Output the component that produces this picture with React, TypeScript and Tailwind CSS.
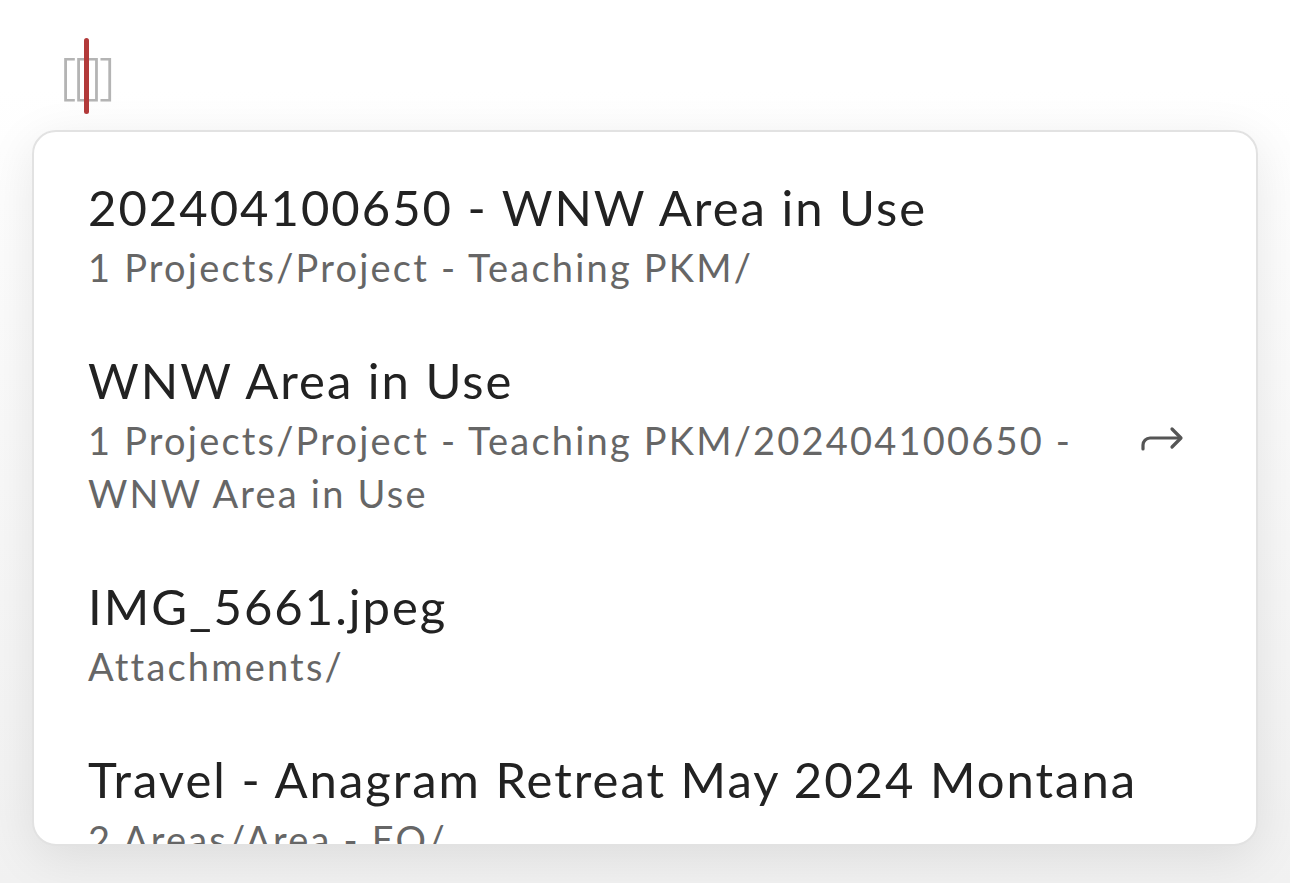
import React from "react";

// Link suggestions shown under the [[ ]] trigger
const suggestions = [
  { id: "1", title: "202404100650 - WNW Area in Use", path: "1 Projects/Project - Teaching PKM/", alias: false },
  { id: "2", title: "WNW Area in Use", path: "1 Projects/Project - Teaching PKM/202404100650 - WNW Area in Use", alias: true },
  { id: "3", title: "IMG_5661.jpeg", path: "Attachments/", alias: false },
  { id: "4", title: "Travel - Anagram Retreat May 2024 Montana", path: "2 Areas/Area - EQ/", alias: false },
];

function AliasArrow() {
  return (
    <svg width="44" height="30" viewBox="0 0 44 30" fill="none" stroke="#555" strokeWidth="3.2" strokeLinecap="round" strokeLinejoin="round">
      <path d="M3 26v-4a7 7 0 0 1 7-7h30" />
      <path d="M32 6l9 9-9 9" />
    </svg>
  );
}

export default function App() {
  return (
    <div
      className="h-[883px] overflow-hidden bg-gradient-to-b from-white from-10% to-[#f1f1f1] flex flex-col"
      style={{ fontFamily: "Lato, 'Noto Sans', sans-serif" }}
    >
      {/* Editor line with the link trigger */}
      <div className="h-[130px] pl-[60px] pt-[36px]">
        <div className="relative w-fit" style={{ fontFamily: "'Noto Sans', sans-serif" }}>
          <span className="block text-[50px] leading-[78px] text-[#b4b4b4] tracking-[-3px] font-light">[[]]</span>
          <span className="absolute left-[24px] top-[2px] w-[5px] h-[76px] rounded-full bg-[#b23a3a]" />
        </div>
      </div>

      {/* Suggestion popup */}
      <div className="mx-[32px] h-[716px] overflow-hidden rounded-[24px] border-2 border-[#e2e2e2] bg-white shadow-[0_12px_50px_rgba(0,0,0,0.09)] pt-[15px]">
        {suggestions.map((s) => (
          <div key={s.id} className="flex items-center pl-[54px] pr-[72px] pt-[30px] pb-[26px]">
            <div className="flex-1 min-w-0">
              <div className="text-[49px] leading-[60px] tracking-[2px] text-[#222]">{s.title}</div>
              <div className="mt-[4px] text-[38px] leading-[53px] tracking-[2.2px] text-[#666] pr-[30px]">{s.path}</div>
            </div>
            {s.alias && (
              <div className="ml-[20px] mt-[6px] shrink-0">
                <AliasArrow />
              </div>
            )}
          </div>
        ))}
      </div>
    </div>
  );
}
